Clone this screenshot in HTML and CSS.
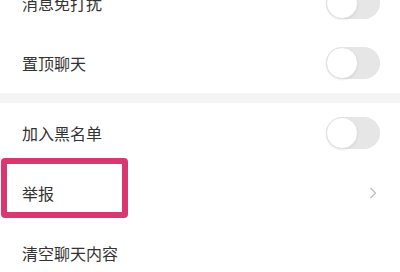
FILE: index.html
```html
<!DOCTYPE html>
<html>
<head>
    <title>聊天设置</title>
    <meta name="viewport" content="width=device-width" />
    <link rel="stylesheet" href="styles.css">
</head>
<body>
    <div class="settings">
        <div class="group">
            <div class="row">
                <span class="label">消息免打扰</span>
                <span class="switch"></span>
            </div>
            <div class="row">
                <span class="label">置顶聊天</span>
                <span class="switch"></span>
            </div>
        </div>
        <div class="gap"></div>
        <div class="group">
            <div class="row">
                <span class="label">加入黑名单</span>
                <span class="switch"></span>
            </div>
            <div class="row marked">
                <span class="label">举报</span>
                <svg class="arrow" width="8" height="12" viewBox="0 0 8 12">
                    <path d="M1.5 1 L6.5 6 L1.5 11" fill="none" stroke="#bbb" stroke-width="1.2"/>
                </svg>
                <div class="highlight"></div>
            </div>
            <div class="row">
                <span class="label">清空聊天内容</span>
            </div>
        </div>
    </div>
</body>
</html>
```

FILE: styles.css
```css
body {
    margin: 0;
    background: #fff;
    font-family: "Noto Sans CJK SC", "Noto Sans", sans-serif;
    overflow: hidden;
}
.settings {
    margin-top: -27px;
}
.row {
    position: relative;
    height: 60px;
    display: flex;
    align-items: center;
    justify-content: space-between;
    padding: 0 20px 0 22px;
}
.label {
    font-size: 16px;
    color: #333;
}
.gap {
    height: 10px;
    background: #f4f4f4;
}
.switch {
    position: relative;
    width: 54px;
    height: 32px;
    border-radius: 16px;
    background: #e6e6e6;
    box-sizing: border-box;
}
.switch::after {
    content: "";
    position: absolute;
    left: 0;
    top: 0;
    width: 32px;
    height: 32px;
    border-radius: 50%;
    background: #fff;
    border: 1px solid #e2e2e2;
    box-sizing: border-box;
    box-shadow: 0 1px 2px rgba(0,0,0,0.08);
}
.arrow {
    margin-right: 3px;
}
.highlight {
    position: absolute;
    left: 1px;
    top: -5px;
    width: 127px;
    height: 60px;
    border: 6px solid #d8376f;
    border-radius: 4px;
    box-sizing: border-box;
}
```
